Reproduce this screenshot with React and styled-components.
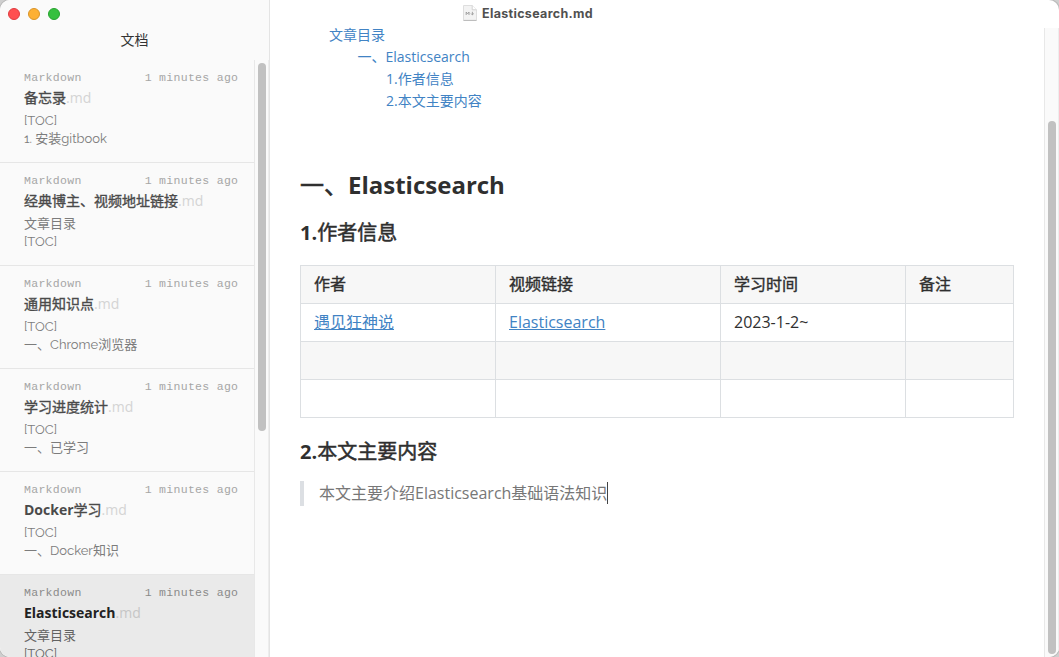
import React from "react";
import styled, { createGlobalStyle } from "styled-components";

const GlobalStyle = createGlobalStyle`
  * { box-sizing: border-box; }
  html, body { margin: 0; background: #cfcfcf; }
  body { font-family: "Open Sans", "Noto Sans CJK SC", sans-serif; }
`;

const Window = styled.div`
  display: flex;
  width: 1059px;
  height: 657px;
  overflow: hidden;
  border-radius: 10px;
  background: #fff;
  box-shadow: 0 0 0 1px #bbb;
`;

const Sidebar = styled.aside`
  display: flex;
  flex-direction: column;
  width: 270px;
  flex: none;
  background: #fafafa;
  border-right: 1px solid #e4e4e4;
`;

const TrafficLights = styled.div`
  display: flex;
  gap: 8px;
  height: 28px;
  padding: 8px 0 0 8px;
`;

const Light = styled.span`
  width: 12px;
  height: 12px;
  border-radius: 50%;
  background: ${(p) => p.$fill};
  border: 1px solid ${(p) => p.$edge};
`;

const SidebarTitle = styled.div`
  height: 32px;
  line-height: 24px;
  text-align: center;
  font-size: 14px;
  color: #333;
`;

const SidebarBody = styled.div`
  display: flex;
  flex: 1;
  min-height: 0;
`;

const FileList = styled.div`
  width: 254px;
  overflow: hidden;
`;

const FileItem = styled.article`
  height: 103px;
  padding: 9px 16px 0 24px;
  border-bottom: 1px solid #e6e6e6;
  background: ${(p) => (p.$active ? "#eaeaea" : "transparent")};
  color: ${(p) => (p.$active ? "#222" : "#4a4a4a")};
`;

const FileMeta = styled.div`
  display: flex;
  justify-content: space-between;
  height: 17px;
  margin-right: -0.3px;
  font: 11.5px/18px "Liberation Mono", monospace;
  letter-spacing: 0.3px;
  color: ${(p) => (p.$active ? "#8a8a8a" : "#a6a6a6")};
`;

const FileName = styled.div`
  height: 26px;
  line-height: 23px;
  font-size: 14px;
  font-weight: 700;
  white-space: nowrap;
`;

const Extension = styled.span`
  font-weight: 400;
  color: ${(p) => (p.$active ? "#c6c6c6" : "#d4d4d4")};
`;

const Preview = styled.div`
  height: 18px;
  line-height: 18px;
  font-family: Raleway, Lato, "Noto Sans CJK SC", sans-serif;
  font-size: 13px;
  color: ${(p) => (p.$active ? "#626262" : "#7c7c7c")};
  white-space: nowrap;
`;

const Track = styled.div`
  width: ${(p) => p.$width}px;
  flex: none;
  padding: ${(p) => p.$top}px 0 0 3px;
  background: #fafafa;
  border-left: 1px solid #e8e8e8;
  border-right: 1px solid #ededed;
`;

const Thumb = styled.div`
  width: 8px;
  height: ${(p) => p.$height}px;
  border-radius: 4px;
  background: #c1c1c1;
`;

const Main = styled.main`
  display: flex;
  flex-direction: column;
  flex: 1;
  min-width: 0;
`;

const TitleBar = styled.header`
  display: flex;
  align-items: center;
  gap: 5px;
  height: 28px;
  padding: 0 0 2px 193px;
  font: 700 12.5px/16px Inter, sans-serif;
  letter-spacing: 0.33px;
  color: #505050;
`;

const DocumentName = styled.span`
  padding-top: 2px;
`;

const EditorRow = styled.div`
  display: flex;
  flex: 1;
  min-height: 0;
`;

const Content = styled.div`
  width: 774px;
  flex: none;
  padding: 0 30px;
  color: #2f2f2f;
  font-size: 16px;
`;

const Toc = styled.nav`
  margin-top: -4px;
  height: 139px;
`;

const TocLink = styled.a`
  display: block;
  height: 22px;
  padding-left: ${(p) => 29 + p.$level * 28.5}px;
  font-size: 14px;
  line-height: 22px;
  color: #4183c4;
`;

const Heading2 = styled.h2`
  margin: 0;
  height: 44px;
  font-size: 24px;
  line-height: 44px;
  font-weight: 700;
`;

const Heading3 = styled.h3`
  margin: ${(p) => p.$top}px 0 0;
  height: 28px;
  font-size: 20px;
  line-height: 28px;
  font-weight: 700;
`;

const MediumHan = styled.span`
  font-weight: 400;
  -webkit-text-stroke: 0.025em currentColor;
`;

const Table = styled.table`
  margin-top: 18px;
  width: 714px;
  table-layout: fixed;
  border-collapse: collapse;
  font-size: 16px;
`;

const Row = styled.tr`
  height: 38px;
  background: ${(p) => (p.$shaded ? "#f7f7f7" : "#fff")};
`;

const HeadCell = styled.th`
  padding: 0 13px 2px;
  border: 1px solid #dcdfe2;
  text-align: left;
  line-height: 24px;
  font-weight: 700;
`;

const Cell = styled.td`
  padding: 0 13px 2px;
  border: 1px solid #dcdfe2;
  line-height: 24px;
`;

const Link = styled.a`
  color: #4183c4;
  text-decoration: underline;
`;

const Quote = styled.blockquote`
  display: flex;
  align-items: center;
  margin: 15px 0 0;
  height: 25px;
  padding: 0 0 2px 15px;
  border-left: 4px solid #dcdfe3;
  color: #777;
  line-height: 24px;
`;

const Caret = styled.span`
  width: 1px;
  height: 22px;
  background: #444;
`;

const files = [
  ["备忘录", "[TOC]", "1. 安装gitbook"],
  ["经典博主、视频地址链接", "文章目录", "[TOC]"],
  ["通用知识点", "[TOC]", "一、Chrome浏览器"],
  ["学习进度统计", "[TOC]", "一、已学习"],
  ["Docker学习", "[TOC]", "一、Docker知识"],
  ["Elasticsearch", "文章目录", "[TOC]"],
];

const columns = [
  ["作者", 195],
  ["视频链接", 225],
  ["学习时间", 185],
  ["备注", 108],
];

// Han runs take a medium stroke, Latin runs keep the bold weight.
function Strong({ text }) {
  return text
    .split(/([\u3000-\u9fff]+)/)
    .filter(Boolean)
    .map((run, i) =>
      /[\u3000-\u9fff]/.test(run) ? <MediumHan key={i}>{run}</MediumHan> : run
    );
}

function MarkdownIcon() {
  return (
    <svg width="14" height="16" viewBox="0 0 14 16">
      <path d="M.5.5h8.7l4.3 4.3v10.4H.5z" fill="#f3f3f3" stroke="#dedede" />
      <path d="M9.2.5v4.3h4.3" fill="#fff" stroke="#d2d2d2" />
      <path d="M.5 15.5h13" stroke="#bdbdbd" />
      <path d="M3.2 10V7l1.4 1.8L6 7v3M9.4 6.8v3M8 8.5l1.4 1.4 1.4-1.4" fill="none" stroke="#999" strokeWidth=".9" />
    </svg>
  );
}

export default function App() {
  return (
    <>
      <GlobalStyle />
      <Window>
        <Sidebar>
          <TrafficLights>
            <Light $fill="#ff4f50" $edge="#df3c40" />
            <Light $fill="#fdb033" $edge="#d99428" />
            <Light $fill="#36c03f" $edge="#27a32f" />
          </TrafficLights>
          <SidebarTitle>文档</SidebarTitle>
          <SidebarBody>
            <FileList>
              {files.map(([name, first, second], i) => {
                const active = i === files.length - 1;
                return (
                  <FileItem key={name} $active={active}>
                    <FileMeta $active={active}>
                      <span>Markdown</span>
                      <span>1 minutes ago</span>
                    </FileMeta>
                    <FileName>
                      <Strong text={name} />
                      <Extension $active={active}>.md</Extension>
                    </FileName>
                    <Preview $active={active}>{first}</Preview>
                    <Preview $active={active}>{second}</Preview>
                  </FileItem>
                );
              })}
            </FileList>
            <Track $width={15} $top={3}>
              <Thumb $height={368} />
            </Track>
          </SidebarBody>
        </Sidebar>
        <Main>
          <TitleBar>
            <MarkdownIcon />
            <DocumentName>Elasticsearch.md</DocumentName>
          </TitleBar>
          <EditorRow>
            <Content>
              <Toc>
                <TocLink $level={0}>文章目录</TocLink>
                <TocLink $level={1}>一、Elasticsearch</TocLink>
                <TocLink $level={2}>1.作者信息</TocLink>
                <TocLink $level={2}>2.本文主要内容</TocLink>
              </Toc>
              <Heading2><Strong text="一、Elasticsearch" /></Heading2>
              <Heading3 $top={12}><Strong text="1.作者信息" /></Heading3>
              <Table>
                <colgroup>
                  {columns.map(([name, width]) => (
                    <col key={name} width={width} />
                  ))}
                </colgroup>
                <thead>
                  <Row $shaded>
                    {columns.map(([name]) => (
                      <HeadCell key={name}><Strong text={name} /></HeadCell>
                    ))}
                  </Row>
                </thead>
                <tbody>
                  <Row>
                    <Cell><Link>遇见狂神说</Link></Cell>
                    <Cell><Link>Elasticsearch</Link></Cell>
                    <Cell>2023-1-2~</Cell>
                    <Cell />
                  </Row>
                  <Row $shaded><Cell /><Cell /><Cell /><Cell /></Row>
                  <Row><Cell /><Cell /><Cell /><Cell /></Row>
                </tbody>
              </Table>
              <Heading3 $top={20}><Strong text="2.本文主要内容" /></Heading3>
              <Quote>
                <span>本文主要介绍Elasticsearch基础语法知识</span>
                <Caret />
              </Quote>
            </Content>
            <Track $width={15} $top={93}>
              <Thumb $height={533} />
            </Track>
          </EditorRow>
        </Main>
      </Window>
    </>
  );
}
